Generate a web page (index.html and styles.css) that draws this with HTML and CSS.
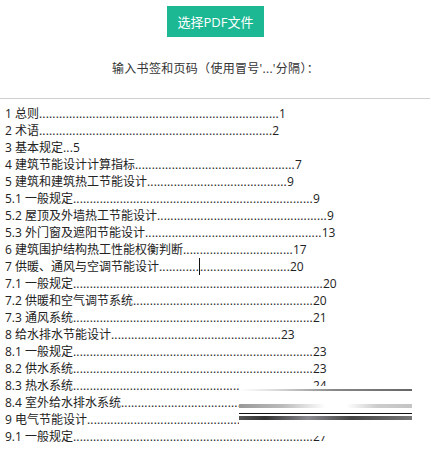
FILE: index.html
```html
<!DOCTYPE html>
<html lang="zh">
<head>
<meta charset="utf-8">
<link rel="stylesheet" href="styles.css">
</head>
<body>
<div class="page">
  <div class="top">
    <button class="pick">选择PDF文件</button>
    <p class="label">输入书签和页码（使用冒号'...'分隔）：</p>
  </div>
  <div class="editor">
    <div class="ln">1 总则<span class="d">........................................................................</span>1</div>
    <div class="ln">2 术语<span class="d">......................................................................</span>2</div>
    <div class="ln">3 基本规定<span class="d">...</span>5</div>
    <div class="ln">4 建筑节能设计计算指标<span class="d">................................................</span>7</div>
    <div class="ln">5 建筑和建筑热工节能设计<span class="d">..........................................</span>9</div>
    <div class="ln">5.1 一般规定<span class="d">........................................................................</span>9</div>
    <div class="ln">5.2 屋顶及外墙热工节能设计<span class="d">...................................................</span>9</div>
    <div class="ln">5.3 外门窗及遮阳节能设计<span class="d">.....................................................</span>13</div>
    <div class="ln">6 建筑围护结构热工性能权衡判断<span class="d">.................................</span>17</div>
    <div class="ln">7 供暖、通风与空调节能设计<span class="d">............</span><span class="caret"></span><span class="d">...........................</span>20</div>
    <div class="ln">7.1 一般规定<span class="d">...........................................................................</span>20</div>
    <div class="ln">7.2 供暖和空气调节系统<span class="d">......................................................</span>20</div>
    <div class="ln">7.3 通风系统<span class="d">........................................................................</span>21</div>
    <div class="ln">8 给水排水节能设计<span class="d">...................................................</span>23</div>
    <div class="ln">8.1 一般规定<span class="d">........................................................................</span>23</div>
    <div class="ln">8.2 供水系统<span class="d">........................................................................</span>23</div>
    <div class="ln">8.3 热水系统<span class="d">........................................................................</span>24</div>
    <div class="ln">8.4 室外给水排水系统<span class="d">.......................................................</span>25</div>
    <div class="ln">9 电气节能设计<span class="d">............................................................</span>27</div>
    <div class="ln">9.1 一般规定<span class="d">........................................................................</span>27</div>
    <div class="glitch">
      <div class="g1"></div>
      <div class="g2"></div>
      <div class="g3"></div>
      <div class="g4"></div>
    </div>
  </div>
</div>
</body>
</html>
```

FILE: styles.css
```css
html, body {
  margin: 0;
  padding: 0;
  background: #fff;
}
.page {
  width: 431px;
  font-family: "Open Sans", "Noto Sans CJK SC", sans-serif;
  color: #222;
}
.top {
  display: flex;
  flex-direction: column;
  align-items: center;
  padding-top: 6px;
}
.pick {
  height: 31px;
  padding: 0 11px;
  border: none;
  background: #1cb894;
  color: #fff;
  font-family: "Open Sans", "Noto Sans CJK SC", sans-serif;
  font-size: 13px;
}
.label {
  margin: 23px 0 0;
  font-size: 12px;
  line-height: 17px;
  letter-spacing: 0.3px;
  color: #333;
}
.editor {
  position: relative;
  margin-top: 21px;
  border-top: 1px solid #cfcfcf;
  width: 430px;
  padding: 6px 0 0 5px;
  box-sizing: border-box;
  font-size: 12px;
  line-height: 17px;
  height: 352px;
  overflow: hidden;
}
.ln {
  white-space: pre;
}
.d {
  letter-spacing: 0.18px;
}
.caret {
  display: inline-block;
  width: 0;
  height: 17px;
  border-left: 1px solid #111;
  vertical-align: top;
}
.glitch {
  position: absolute;
  left: 239px;
  top: 287px;
  width: 173px;
  height: 50px;
  background: #fff;
  display: flex;
  flex-direction: column;
}
.g1 {
  margin-top: 3px;
  height: 2px;
  background: linear-gradient(to right, #fff 0%, #ddd 20%, #888 55%, #666 100%);
}
.g2 {
  margin-top: 13px;
  height: 4px;
  background: linear-gradient(to right, #999 0%, #bbb 25%, #fff 50%, #fff 62%, #ccc 80%, #c4c4c4 100%);
}
.g3 {
  margin-top: 5px;
  height: 1px;
  background: #111;
}
.g4 {
  margin-top: 2px;
  height: 4px;
  background: linear-gradient(to right, #555 0%, #333 15%, #8a8a90 40%, #444 65%, #777 100%);
}
```
